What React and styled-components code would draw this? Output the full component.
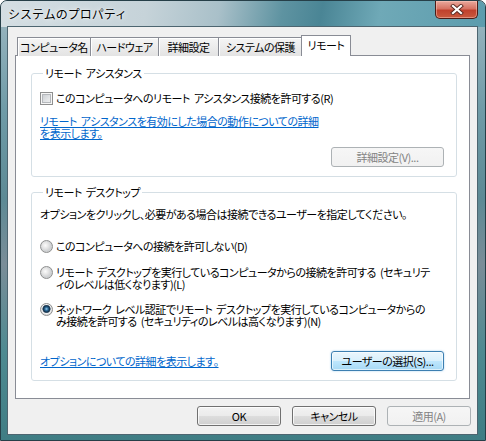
import React from 'react'
import styled, { createGlobalStyle, css } from 'styled-components'

const GlobalStyle = createGlobalStyle`
  html, body {
    margin: 0;
    padding: 0;
    height: 100%;
    background: #ffffff;
  }
  body {
    font-family: "Noto Sans CJK JP", "Liberation Sans", sans-serif;
  }
  #root {
    height: 100%;
  }
`

const Window = styled.div`
  box-sizing: border-box;
  width: 486px;
  height: 441px;
  display: flex;
  flex-direction: column;
  border: 1px solid #263f48;
  border-radius: 7px 7px 0 0;
  overflow: hidden;
  background: linear-gradient(
    180deg,
    #9fb9c3 0%,
    #6f9ba7 25%,
    #5d8a95 45%,
    #7a8d98 60%,
    #4e8a91 80%,
    #3f7d84 100%
  );
`

const TitleBar = styled.div`
  height: 26px;
  flex: none;
  display: flex;
  align-items: flex-start;
  justify-content: space-between;
  padding: 0 7px 0 7px;
  background: linear-gradient(
    100deg,
    #d4dee3 0%,
    #c6d3d9 30%,
    #a9c0c9 45%,
    #5e93a1 58%,
    #4a8595 66%,
    #6fa9b7 78%,
    #5c9cad 100%
  );
`

const Title = styled.span`
  padding-top: 5px;
  font-size: 12px;
  line-height: 16px;
  color: #000;
  text-shadow: 0 0 6px rgba(255, 255, 255, 0.95), 0 0 2px rgba(255, 255, 255, 0.9);
`

const CloseButton = styled.div`
  box-sizing: border-box;
  width: 43px;
  height: 18px;
  display: flex;
  align-items: center;
  justify-content: center;
  border: 1px solid #4b1c17;
  border-top: none;
  border-radius: 0 0 5px 5px;
  background: linear-gradient(180deg, #e9a99d 0%, #d67363 45%, #c0412d 55%, #c95a3f 100%);
  box-shadow: inset 0 0 0 1px rgba(255, 210, 200, 0.45);
`

const Frame = styled.div`
  flex: 1;
  display: flex;
  min-width: 0;
  padding: 0 8px 6px 7px;
`

const Client = styled.div`
  flex: 1;
  min-width: 0;
  display: flex;
  flex-direction: column;
  padding: 8px 7px 8px 7px;
  background: #f0f0f0;
  box-shadow: 0 0 0 1px #4d6570;
  font-size: 11px;
  line-height: 12px;
  letter-spacing: -0.5px;
  word-spacing: 2px;
  font-feature-settings: "palt";
  color: #000;
`

const TabRow = styled.div`
  height: 21px;
  display: flex;
  align-items: flex-end;
  padding-left: 2px;
  margin-bottom: -1px;
  position: relative;
  z-index: 1;
`

const Tab = styled.div`
  box-sizing: border-box;
  width: ${p => p.$w}px;
  height: 19px;
  margin-right: -1px;
  border: 1px solid #898c95;
  border-bottom: none;
  display: flex;
  align-items: center;
  justify-content: center;
  white-space: nowrap;
  overflow: hidden;
  background: linear-gradient(180deg, #f5f5f5 0%, #ececec 50%, #e3e3e3 100%);
  box-shadow: inset 1px 1px 0 #ffffff;
  ${p => p.$active && css`
    height: 21px;
    margin-left: -1px;
    padding-bottom: 2px;
    background: #ffffff;
    box-shadow: none;
    position: relative;
  `}
`

const Panel = styled.div`
  flex: 1;
  min-width: 0;
  display: flex;
  flex-direction: column;
  padding: 11px 12px 0 15px;
  background: #ffffff;
  border: 1px solid #898c95;
`

const Group = styled.fieldset`
  margin: ${p => p.$mt || 0}px 0 0 0;
  padding: 0 12px 9px 8px;
  min-width: 0;
  min-inline-size: 0;
  border: 1px solid #d5dfe5;
  border-radius: 3px;
  display: flex;
  flex-direction: column;
`

const Legend = styled.legend`
  margin-left: 3px;
  padding: 0 2px;
  line-height: 12px;
`

const OptionRow = styled.div`
  display: flex;
  align-items: flex-start;
  gap: 3px;
  margin-top: ${p => p.$mt}px;
  white-space: nowrap;
`

const CheckBox = styled.span`
  box-sizing: border-box;
  width: 13px;
  height: 13px;
  flex: none;
  border: 1px solid #8e8f8f;
  background: linear-gradient(135deg, #c2c6cb 0%, #e4e6e8 60%, #f4f4f4 100%);
  box-shadow: inset 0 0 0 1px #f6f6f6, inset 0 0 0 2px #b5b8bc;
`

const Radio = styled.span`
  box-sizing: border-box;
  width: 13px;
  height: 13px;
  flex: none;
  border-radius: 50%;
  border: 1px solid #8e8f8f;
  background: ${p => p.$checked
    ? 'radial-gradient(circle at 50% 45%, #9fd0f0 0, #2d6d9c 1.6px, #12304a 3.2px, #5a6e80 3.9px, #f4f4f4 4.4px, #dcdcdc 5.6px)'
    : 'radial-gradient(circle at 40% 40%, #fbfbfb 0, #e6e6e6 3px, #cfd1d3 5.6px)'};
`

const Text = styled.div`
  margin-top: ${p => p.$mt || 0}px;
  white-space: nowrap;
`

const Link = styled.a`
  display: block;
  margin-top: ${p => p.$mt || 0}px;
  color: #0066cc;
  text-decoration: underline;
  text-underline-offset: 1px;
  white-space: nowrap;
  cursor: pointer;
`

const ActionRow = styled.div`
  display: flex;
  align-items: center;
  justify-content: space-between;
  margin-top: ${p => p.$mt}px;
`

const Button = styled.button`
  box-sizing: border-box;
  width: ${p => p.$w || 84}px;
  height: 20px;
  padding: 0;
  font-family: inherit;
  font-size: 11px;
  line-height: 12px;
  letter-spacing: -0.5px;
  font-feature-settings: "palt";
  color: #000;
  border: 1px solid #707070;
  border-radius: 3px;
  background: linear-gradient(180deg, #f2f2f2 0%, #ebebeb 48%, #dddddd 52%, #cfcfcf 100%);
  box-shadow: inset 0 0 0 1px rgba(255, 255, 255, 0.75);
  white-space: nowrap;
  ${p => p.$focused && css`
    border-color: #3c7fb1;
    background: linear-gradient(180deg, #eaf6fd 0%, #d9f0fc 48%, #bee6fd 52%, #a7d9f5 100%);
    box-shadow: inset 0 0 0 1px rgba(255, 255, 255, 0.6), 0 0 2px rgba(90, 170, 230, 0.6);
  `}
  &:disabled {
    color: #838383;
    border-color: #adb2b5;
    background: linear-gradient(180deg, #f6f6f6 0%, #f1f1f1 100%);
    box-shadow: none;
  }
`

const ButtonRow = styled.div`
  display: flex;
  justify-content: flex-end;
  gap: 11px;
  margin: 7px -1px 0 0;
`

const CloseGlyph = () => (
  <svg width="14" height="11" viewBox="0 0 14 11">
    <path d="M3 2 L11 9 M11 2 L3 9" stroke="#5a2a22" strokeWidth="4" strokeLinecap="square" fill="none" />
    <path d="M3 2 L11 9 M11 2 L3 9" stroke="#ffffff" strokeWidth="2.2" strokeLinecap="square" fill="none" />
  </svg>
)

const tabs = [
  { label: 'コンピュータ名', w: 74 },
  { label: 'ハードウェア', w: 69 },
  { label: '詳細設定', w: 61 },
  { label: 'システムの保護', w: 85 },
  { label: 'リモート', w: 50, active: true },
]

const App = () => {
  return (
    <>
      <GlobalStyle />
      <Window>
        <TitleBar>
          <Title>システムのプロパティ</Title>
          <CloseButton><CloseGlyph /></CloseButton>
        </TitleBar>
        <Frame>
          <Client>
            <TabRow>
              {tabs.map(t => (
                <Tab key={t.label} $w={t.w} $active={t.active}>{t.label}</Tab>
              ))}
            </TabRow>
            <Panel>
              <Group>
                <Legend>リモート アシスタンス</Legend>
                <OptionRow $mt={13}>
                  <CheckBox />
                  <span>このコンピュータへのリモート アシスタンス接続を許可する(R)</span>
                </OptionRow>
                <Link $mt={10}>
                  リモート アシスタンスを有効にした場合の動作についての詳細<br />を表示します。
                </Link>
                <ActionRow $mt={8}>
                  <span />
                  <Button disabled $w={113}>詳細設定(V)...</Button>
                </ActionRow>
              </Group>

              <Group $mt={9}>
                <Legend>リモート デスクトップ</Legend>
                <Text $mt={10}>オプションをクリックし、必要がある場合は接続できるユーザーを指定してください。</Text>
                <OptionRow $mt={20}>
                  <Radio />
                  <span>このコンピュータへの接続を許可しない(D)</span>
                </OptionRow>
                <OptionRow $mt={13}>
                  <Radio />
                  <span>
                    リモート デスクトップを実行しているコンピュータからの接続を許可する (セキュリテ<br />
                    ィのレベルは低くなります)(L)
                  </span>
                </OptionRow>
                <OptionRow $mt={13}>
                  <Radio $checked />
                  <span>
                    ネットワーク レベル認証でリモート デスクトップを実行しているコンピュータからの<br />
                    み接続を許可する (セキュリティのレベルは高くなります)(N)
                  </span>
                </OptionRow>
                <ActionRow $mt={24}>
                  <Link>オプションについての詳細を表示します。</Link>
                  <Button $w={113} $focused>ユーザーの選択(S)...</Button>
                </ActionRow>
              </Group>
            </Panel>
            <ButtonRow>
              <Button>OK</Button>
              <Button>キャンセル</Button>
              <Button disabled>適用(A)</Button>
            </ButtonRow>
          </Client>
        </Frame>
      </Window>
    </>
  )
}

export default App
